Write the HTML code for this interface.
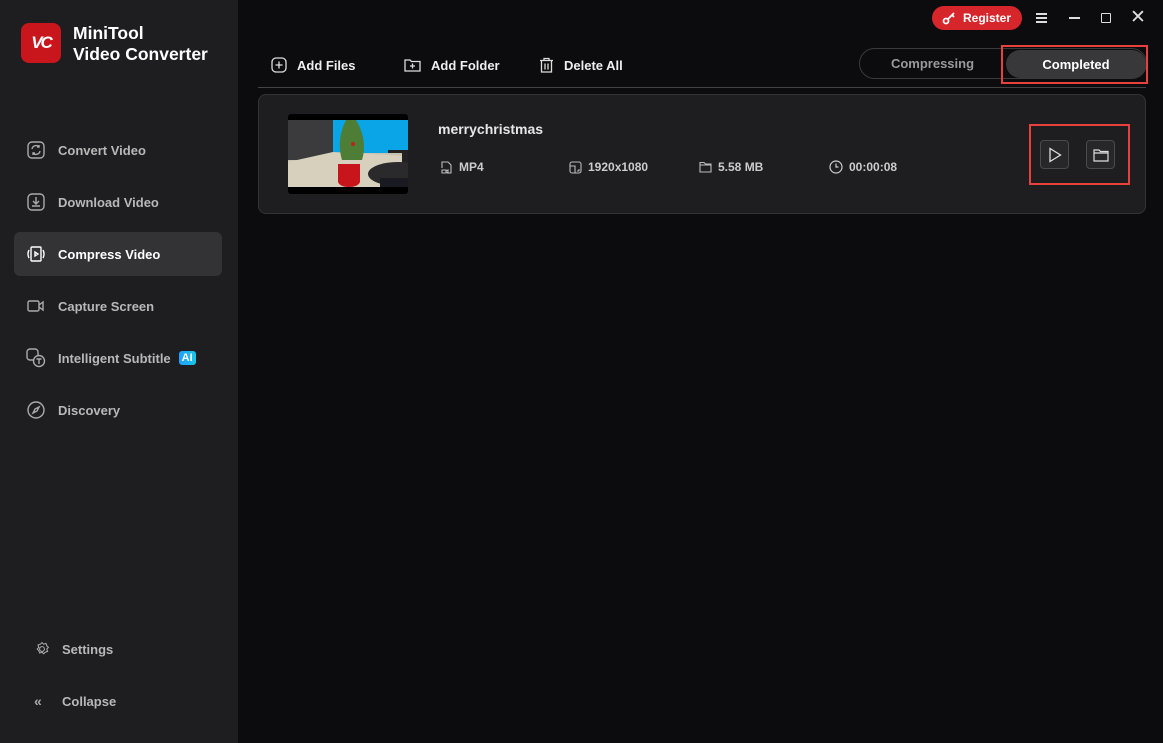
<!DOCTYPE html>
<html><head><meta charset="utf-8"><style>
*{margin:0;padding:0;box-sizing:border-box}
body{width:1163px;height:743px;background:#0c0c0e;font-family:"Liberation Sans",sans-serif;font-weight:bold;overflow:hidden;position:relative;color:#ddd}
.side{position:absolute;left:0;top:0;width:238px;height:743px;background:#1e1e20}
.logo{position:absolute;left:21px;top:23px;width:40px;height:40px;border-radius:8px;background:#c8161c;color:#fff;font-size:17px;font-style:italic;display:flex;align-items:center;justify-content:center;letter-spacing:-2px}
.brand{position:absolute;left:73px;top:23px;color:#fff;font-size:17.5px;line-height:21px}
.nav{position:absolute;left:14px;width:208px;height:44px;border-radius:6px;display:flex;align-items:center;padding-left:12px;font-size:13px;color:#b8b8b8}
.nav svg{width:20px;height:20px;margin-right:12px;flex:none}
.nav.act{background:#333336;color:#fff}
.ai{display:inline-block;margin-left:8px;background:linear-gradient(90deg,#1fa0ff,#19c6e8);color:#fff;font-size:11px;padding:1px 3px;border-radius:3px}
.tb{position:absolute;top:57px;display:flex;align-items:center;font-size:13px;color:#eee}
.tb svg{margin-right:10px}
.line{position:absolute;left:258px;top:87px;width:888px;height:1px;background:#444}
.seg{position:absolute;left:859px;top:48px;width:288px;height:31px;border:1px solid #3a3a3c;border-radius:16px}
.card{position:absolute;left:258px;top:94px;width:888px;height:120px;background:#1e1e20;border:1px solid #333;border-radius:8px}
.meta{position:absolute;top:160px;display:flex;align-items:center;font-size:12px;color:#ccc}
.meta svg{margin-right:6px}
.btn{position:absolute;top:140px;width:29px;height:29px;border:1px solid #4a4a4c;border-radius:4px;background:#27272a;display:flex;align-items:center;justify-content:center}
</style></head><body>
<div class="side">
<div class="logo">VC</div>
<div class="brand">MiniTool<br>Video Converter</div>
<div class="nav" style="top:128px"><svg viewBox="0 0 20 20" fill="none" stroke="#aaa" stroke-width="1.4"><rect x="2" y="2" width="16" height="16" rx="4"/><path d="M6 9a4 4 0 0 1 7-2M14 11a4 4 0 0 1-7 2M13 5v2h-2M7 15v-2h2"/></svg>Convert Video</div>
<div class="nav" style="top:180px"><svg viewBox="0 0 20 20" fill="none" stroke="#aaa" stroke-width="1.4"><rect x="2" y="2" width="16" height="16" rx="4"/><path d="M10 5v7M7 9l3 3 3-3M6 14h8"/></svg>Download Video</div>
<div class="nav act" style="top:232px"><svg viewBox="0 0 20 20" fill="none" stroke="#fff" stroke-width="1.4"><rect x="5" y="3" width="10" height="14" rx="1"/><path d="M9 8v4l3-2z M3 6q-2 4 0 8M17 6q2 4 0 8"/></svg>Compress Video</div>
<div class="nav" style="top:284px"><svg viewBox="0 0 20 20" fill="none" stroke="#aaa" stroke-width="1.4"><rect x="2" y="5" width="11" height="10" rx="1.5"/><path d="M13 9l4-3v8l-4-3"/></svg>Capture Screen</div>
<div class="nav" style="top:336px"><svg viewBox="0 0 20 20" fill="none" stroke="#aaa" stroke-width="1.4"><rect x="1" y="1" width="11" height="11" rx="3"/><circle cx="13" cy="13" r="5.5" fill="#1e1e20"/><path d="M10.5 11h5M13 11v5"/></svg>Intelligent Subtitle<span class="ai">AI</span></div>
<div class="nav" style="top:388px"><svg viewBox="0 0 20 20" fill="none" stroke="#aaa" stroke-width="1.4"><circle cx="10" cy="10" r="8"/><path d="M13 7l-2 4-4 2 2-4z"/></svg>Discovery</div>
<div class="nav" style="top:627px;padding-left:20px"><svg viewBox="0 0 20 20" fill="none" stroke="#aaa" stroke-width="1.3" style="width:16px;height:16px"><circle cx="10" cy="10" r="3"/><path d="M10 2l2 2 3-1 1 3 2 2-2 2 1 3-3 1-2 2-2-2-3 1-1-3-2-2 2-2-1-3 3-1z"/></svg>Settings</div>
<div class="nav" style="top:679px;padding-left:20px"><span style="width:16px;margin-right:12px;color:#aaa;font-size:14px">«</span>Collapse</div>
</div>

<div class="tb" style="left:271px"><svg width="16" height="16" viewBox="0 0 16 16" fill="none" stroke="#ddd" stroke-width="1.3"><rect x="1" y="1" width="14" height="14" rx="4"/><path d="M8 4.5v7M4.5 8h7"/></svg>Add Files</div>
<div class="tb" style="left:404px"><svg width="17" height="16" viewBox="0 0 17 16" fill="none" stroke="#ddd" stroke-width="1.3"><path d="M1 3h5l1.5 1.5H16V14H1z"/><path d="M8.5 6.5v5M6 9h5"/></svg>Add Folder</div>
<div class="tb" style="left:539px"><svg width="15" height="16" viewBox="0 0 15 16" fill="none" stroke="#ddd" stroke-width="1.3"><path d="M1 3.5h13M5 3.5V1.5h5v2M2.5 3.5V15h10V3.5M6 6.5v6M9 6.5v6"/></svg>Delete All</div>
<div class="line"></div>

<div style="position:absolute;left:932px;top:6px;width:90px;height:24px;border-radius:12px;background:#d7262b;color:#fff;font-size:12px;display:flex;align-items:center;padding-left:10px"><svg width="14" height="14" viewBox="0 0 14 14" fill="none" stroke="#fff" stroke-width="1.8"><circle cx="4" cy="10" r="2.5"/><path d="M6 8l6-6M10 4l2 2"/></svg><span style="margin-left:7px">Register</span></div>
<div style="position:absolute;left:1036px;top:13px;width:11px;height:10px;border-top:2px solid #ddd;border-bottom:2px solid #ddd"><div style="margin-top:2px;height:2px;background:#ddd"></div></div>
<div style="position:absolute;left:1069px;top:17px;width:11px;height:2px;background:#ddd"></div>
<div style="position:absolute;left:1101px;top:13px;width:10px;height:10px;border:1.6px solid #ddd;border-radius:1px"></div>
<div style="position:absolute;left:1130px;top:6px;font-size:19px;font-weight:normal;color:#ddd">✕</div>

<div class="seg"><div style="position:absolute;left:0;top:0;width:145px;height:29px;display:flex;align-items:center;justify-content:center;font-size:13px;color:#9a9a9a">Compressing</div>
<div style="position:absolute;left:146px;top:1px;width:140px;height:28px;border-radius:14px;background:#38383a;display:flex;align-items:center;justify-content:center;font-size:13px;color:#fff">Completed</div></div>
<div style="position:absolute;left:1001px;top:45px;width:147px;height:39px;border:2px solid #e8413c"></div>

<div class="card"></div>
<svg style="position:absolute;left:288px;top:114px" width="120" height="80" viewBox="0 0 120 80"><rect width="120" height="80" rx="3" fill="#000"/><rect x="0" y="6" width="120" height="67" fill="#c8c2b0"/><rect x="0" y="6" width="45" height="40" fill="#3b3b3d"/><rect x="45" y="6" width="75" height="33" fill="#0aa5e6"/><path d="M0 48L45 38 120 42V73H0z" fill="#d6d0bc"/><rect x="100" y="36" width="20" height="3" fill="#222"/><rect x="114" y="38" width="6" height="20" fill="#222"/><ellipse cx="110" cy="60" rx="30" ry="12" fill="#2a2a2c"/><rect x="92" y="64" width="28" height="9" fill="#1a1a22"/><path d="M58 6q-10 20 -4 40h20q6-20-6-40z" fill="#4e7d36"/><circle cx="65" cy="30" r="2" fill="#b22"/><path d="M50 50h22v18q-2 5-11 5t-11-5z" fill="#c8151b"/></svg>
<div style="position:absolute;left:438px;top:121px;font-size:14px;color:#e6e6e6">merrychristmas</div>
<div class="meta" style="left:440px"><svg width="13" height="13" viewBox="0 0 13 13" fill="none" stroke="#bbb" stroke-width="1.1"><path d="M2 7V1h6l3 3v8H7M2 9h4v3H2zM6 10l2-1v3l-2-1"/></svg>MP4</div>
<div class="meta" style="left:569px"><svg width="13" height="13" viewBox="0 0 13 13" fill="none" stroke="#bbb" stroke-width="1.1"><rect x="1" y="1" width="11" height="11" rx="2"/><path d="M1 5h5v7M8 10h2V8"/></svg>1920x1080</div>
<div class="meta" style="left:699px"><svg width="13" height="12" viewBox="0 0 13 12" fill="none" stroke="#bbb" stroke-width="1.1"><path d="M1 1.5h4l1.5 1.5H12V11H1zM1 4h11"/></svg>5.58 MB</div>
<div class="meta" style="left:829px"><svg width="14" height="14" viewBox="0 0 14 14" fill="none" stroke="#ccc" stroke-width="1.2"><circle cx="7" cy="7" r="6"/><path d="M7 3.5V7h2.5"/></svg>00:00:08</div>
<div class="btn" style="left:1040px"><svg width="14" height="16" viewBox="0 0 14 16" fill="none" stroke="#ddd" stroke-width="1.3"><path d="M2 1.5v13L12.5 8z"/></svg></div>
<div class="btn" style="left:1086px"><svg width="16" height="14" viewBox="0 0 16 14" fill="none" stroke="#ddd" stroke-width="1.2"><path d="M1 2h5l1.5 1.5H15V13H1zM1 5h14"/></svg></div>
<div style="position:absolute;left:1029px;top:124px;width:101px;height:61px;border:2px solid #e8413c"></div>
</body></html>
